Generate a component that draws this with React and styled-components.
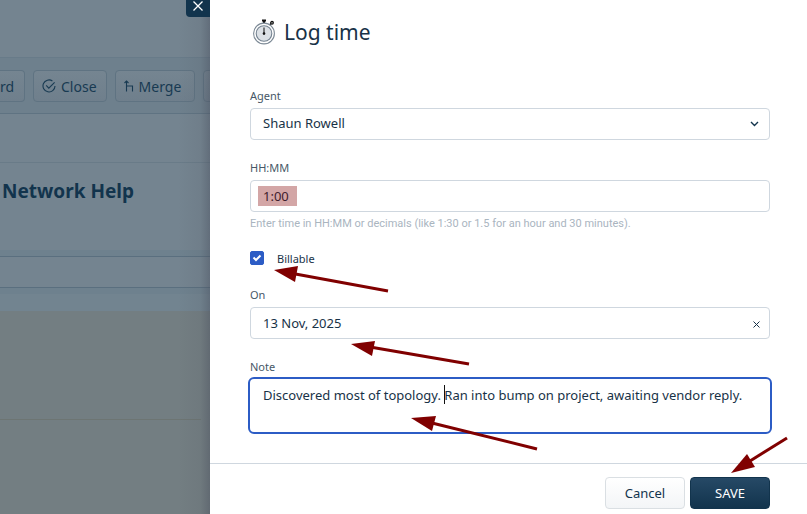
import { useState } from "react"
import styled, { createGlobalStyle } from "styled-components"

const arrows = [
  { line: [178, 291, 80, 273], head: "64,270 88,266 85,282" },
  { line: [259, 364, 160, 347], head: "141,344 165,341 162,356" },
  { line: [327, 449, 222, 423], head: "201,418 226,416 222,431" },
  { line: [577, 438, 540, 461], head: "521,473 537,454 545,467" },
]

export default function App(){
  const [agent, setAgent] = useState("shaun")
  const [time, setTime] = useState("1:00")
  const [billable, setBillable] = useState(true)
  const [date, setDate] = useState("13 Nov, 2025")
  const [note, setNote] = useState("Discovered most of topology. Ran into bump on project, awaiting vendor reply.")

  return (
    <Page>
      <GlobalStyle />
      <Ticket>
        <TopBar />
        <Toolbar>
          <ToolButton $cut>rd</ToolButton>
          <ToolButton><CheckIcon />Close</ToolButton>
          <ToolButton $wide><MergeIcon />Merge</ToolButton>
          <ToolButton aria-label="More" />
        </Toolbar>
        <Meta />
        <Subject>Network Help</Subject>
        <Strip><StripInner /></Strip>
        <Spacer />
        <Conversation><Divider /></Conversation>
        <Shade />
        <CloseDrawer aria-label="Close panel">
          <svg width="12" height="12" viewBox="0 0 12 12"><path d="M1.5 1.5l9 9M10.5 1.5l-9 9" stroke="currentColor" strokeWidth="1.3" /></svg>
        </CloseDrawer>
      </Ticket>
      <Drawer>
        <Header>
          <StopwatchIcon />
          <Title>Log time</Title>
        </Header>
        <Form>
          <Field>
            <Label htmlFor="agent">Agent</Label>
            <Control>
              <Select id="agent" value={agent} onChange={(e) => setAgent(e.target.value)}>
                <option value="shaun">Shaun Rowell</option>
              </Select>
              <Chevron width="9" height="6" viewBox="0 0 9 6"><path d="M1 1l3.5 3.5L8 1" fill="none" stroke="#12344d" strokeWidth="1.4" /></Chevron>
            </Control>
          </Field>
          <Field>
            <Label htmlFor="time">HH:MM</Label>
            <Control>
              <Input id="time" value={time} onChange={(e) => setTime(e.target.value)} />
              <Highlight />
            </Control>
            <Hint>Enter time in HH:MM or decimals (like 1:30 or 1.5 for an hour and 30 minutes).</Hint>
          </Field>
          <CheckRow>
            <Checkbox id="billable" type="checkbox" checked={billable} onChange={(e) => setBillable(e.target.checked)} />
            <CheckLabel htmlFor="billable">Billable</CheckLabel>
          </CheckRow>
          <Field>
            <Label htmlFor="date">On</Label>
            <Control>
              <Input id="date" value={date} onChange={(e) => setDate(e.target.value)} />
              <Clear type="button" aria-label="Clear date" onClick={() => setDate("")}>
                <svg width="7" height="7" viewBox="0 0 7 7"><path d="M.5 .5l6 6M6.5 .5l-6 6" stroke="currentColor" strokeWidth="1" /></svg>
              </Clear>
            </Control>
          </Field>
          <Field>
            <Label htmlFor="note">Note</Label>
            <Control>
              <TextArea id="note" value={note} onChange={(e) => setNote(e.target.value)} />
              <Caret />
            </Control>
          </Field>
        </Form>
        <Footer>
          <Button>Cancel</Button>
          <Button $primary>SAVE</Button>
        </Footer>
        <Annotations aria-hidden="true">
          {arrows.map(({ line, head }) => (
            <g key={head}>
              <line x1={line[0]} y1={line[1]} x2={line[2]} y2={line[3]} stroke="#800000" strokeWidth="3" />
              <polygon points={head} fill="#800000" />
            </g>
          ))}
        </Annotations>
      </Drawer>
    </Page>
  )
}

function CheckIcon(){
  return (
    <svg width="14" height="14" viewBox="0 0 14 14" fill="none" stroke="currentColor" strokeWidth="1.1">
      <path d="M10.4 2A6 6 0 1 0 13 7" />
      <path d="M4.2 6.4l2.6 2.7L12.6 3.4" />
    </svg>
  )
}

function MergeIcon(){
  return (
    <svg width="10" height="12" viewBox="0 0 10 12" fill="none" stroke="currentColor" strokeWidth="1.1">
      <path d="M.5 3l2-2 2 2M2.5 1v10.5M2.5 6h6v5.5" />
    </svg>
  )
}

function StopwatchIcon(){
  return (
    <svg width="24" height="26" viewBox="0 0 24 26">
      <path d="M10 1.5h4M12 2v2.5" stroke="#111" strokeWidth="2.2" />
      <path d="M17.5 6l1.5-1.5" stroke="#111" strokeWidth="1.4" />
      <circle cx="20" cy="3.8" r="1.3" fill="#fff" stroke="#111" strokeWidth="1.3" />
      <circle cx="12" cy="14.5" r="10.4" fill="#fff" stroke="#7d8a96" strokeWidth="1.1" />
      <circle cx="12" cy="14.5" r="7.8" fill="#dce1e6" stroke="#748290" strokeWidth="1.1" />
      <path d="M12 8.5v6" stroke="#111" strokeWidth="1" />
      <circle cx="12" cy="14.6" r="1.3" fill="#111" />
    </svg>
  )
}

const GlobalStyle = createGlobalStyle`
  * {
    box-sizing: border-box;
  }
  body {
    margin: 0;
    color: #183247;
    font-family: 'Noto Sans', sans-serif;
    font-size: 13px;
  }
  button, input, select, textarea {
    font: inherit;
    color: inherit;
  }
`
const Page = styled.div`
  display: flex;
  min-height: 100vh;
`
const Ticket = styled.div`
  position: relative;
  display: flex;
  flex-direction: column;
  flex: 0 0 210px;
  overflow: hidden;
  background-color: #748490;
`
const TopBar = styled.div`
  height: 57px;
`
const Toolbar = styled.div`
  display: flex;
  gap: 8px;
  height: 57px;
  padding-top: 12px;
  background-color: #6e808d;
  border-top: 1px solid #687b89;
  border-bottom: 1px solid #5f7382;
`
const ToolButton = styled.button`
  display: flex;
  align-items: center;
  flex-shrink: 0;
  gap: 5px;
  height: 32px;
  min-width: ${({ $wide }) => $wide ? "80px" : "25px"};
  padding: 0 9px 0 ${({ $cut }) => $cut ? "0" : "8px"};
  font-size: 14px;
  color: #183a52;
  background: linear-gradient(#758591, #6f7f8c);
  border: 1px solid #5f7382;
  border-left-width: ${({ $cut }) => $cut ? "0" : "1px"};
  border-radius: ${({ $cut }) => $cut ? "0 4px 4px 0" : "4px"};
`
const Meta = styled.div`
  height: 49px;
  border-bottom: 1px solid #697b88;
`
const Subject = styled.h2`
  height: 87px;
  margin: 0;
  padding: 16px 0 0 2px;
  font-size: 19px;
  line-height: 24px;
  color: #12344d;
`
const Strip = styled.div`
  padding: 6px 0;
  background-color: #6e818e;
`
const StripInner = styled.div`
  height: 32px;
  background-color: #748490;
  border-top: 1px solid #5a6f7f;
  border-bottom: 1px solid #5a6f7f;
`
const Spacer = styled.div`
  height: 17px;
  background-color: #728490;
`
const Conversation = styled.div`
  flex: 1;
  padding: 108px 9px 0 0;
  background-color: #737e82;
`
const Divider = styled.div`
  height: 1px;
  background-color: #6d7573;
`
const Shade = styled.div`
  position: absolute;
  inset: 0 0 0 auto;
  width: 32px;
  background: linear-gradient(to right, transparent, rgba(80, 85, 95, 0.12) 70%, rgba(70, 75, 90, 0.4));
`
const CloseDrawer = styled.button`
  position: absolute;
  top: 0;
  right: 0;
  display: flex;
  justify-content: center;
  width: 24px;
  height: 17px;
  padding: 0;
  color: #fff;
  background-color: #12344d;
  border: 0;
  border-radius: 0 0 0 4px;
`
const Drawer = styled.main`
  position: relative;
  display: flex;
  flex-direction: column;
  flex: 1;
  min-width: 0;
  background-color: #fff;
`
const Header = styled.header`
  display: flex;
  align-items: center;
  gap: 8px;
  height: 88px;
  padding: 0 42px 24px;
`
const Title = styled.h1`
  margin: 0;
  font-size: 21px;
  font-weight: 400;
  line-height: 28px;
`
const Form = styled.form`
  display: flex;
  flex: 1;
  flex-direction: column;
  gap: 20px;
  padding: 0 37px 31px 40px;
`
const Field = styled.div`
  display: flex;
  flex-direction: column;
  gap: 4px;
`
const Label = styled.label`
  font-size: 11px;
  line-height: 16px;
  color: #475867;
`
const Control = styled.div`
  position: relative;
  display: flex;
`
const Input = styled.input`
  width: 100%;
  height: 32px;
  padding: 0 12px;
  background-color: #fff;
  border: 1px solid #cfd7df;
  border-radius: 4px;
`
const Select = styled(Input).attrs({ as: "select" })`
  padding-bottom: 2px;
  appearance: none;
`
const Chevron = styled.svg`
  position: absolute;
  top: 13px;
  right: 11px;
  pointer-events: none;
`
const Highlight = styled.span`
  position: absolute;
  top: 6px;
  left: 8px;
  width: 39px;
  height: 20px;
  background-color: rgba(128, 0, 0, 0.35);
  pointer-events: none;
`
const Hint = styled.span`
  font-family: Roboto, sans-serif;
  font-size: 11px;
  line-height: 15px;
  color: #aab5bf;
`
const CheckRow = styled.div`
  display: flex;
  gap: 13px;
  height: 16px;
`
const Checkbox = styled.input`
  appearance: none;
  width: 14px;
  height: 14px;
  margin: 0;
  border: 1px solid #2c5cc5;
  border-radius: 2px;

  &:checked{
    background: #2c5cc5 url("data:image/svg+xml,%3Csvg xmlns='http://www.w3.org/2000/svg' viewBox='0 0 12 12'%3E%3Cpath d='M2.5 5.5l2.5 2.5 4.5-4.5' fill='none' stroke='white' stroke-width='2'/%3E%3C/svg%3E");
  }
`
const CheckLabel = styled.label`
  font-size: 11px;
  line-height: 16px;
`
const Clear = styled.button`
  position: absolute;
  top: 8px;
  right: 6px;
  display: flex;
  align-items: center;
  justify-content: center;
  width: 15px;
  height: 19px;
  padding: 0;
  background: none;
  border: 0;
`
const TextArea = styled.textarea`
  width: 100%;
  height: 53px;
  padding: 6px 13px;
  line-height: 20px;
  border: 0;
  border-radius: 4px;
  outline: 2px solid #2c5cc5;
  resize: none;
`
const Caret = styled.span`
  position: absolute;
  top: 6px;
  left: 194px;
  width: 1px;
  height: 19px;
  background-color: #111;
`
const Footer = styled.footer`
  display: flex;
  justify-content: flex-end;
  gap: 5px;
  padding: 13px 37px 5px;
  border-top: 1px solid #cfd7df;
`
const Button = styled.button`
  width: 80px;
  height: 32px;
  padding: 0;
  color: ${({ $primary }) => $primary ? "#fff" : "#12344d"};
  background: ${({ $primary }) => $primary ? "linear-gradient(#264966, #12344d)" : "linear-gradient(#fff, #f3f5f7)"};
  border: 1px solid ${({ $primary }) => $primary ? "#12344d" : "#dadfe3"};
  border-radius: 4px;
`
const Annotations = styled.svg`
  position: absolute;
  inset: 0;
  width: 100%;
  height: 100%;
  pointer-events: none;
`
